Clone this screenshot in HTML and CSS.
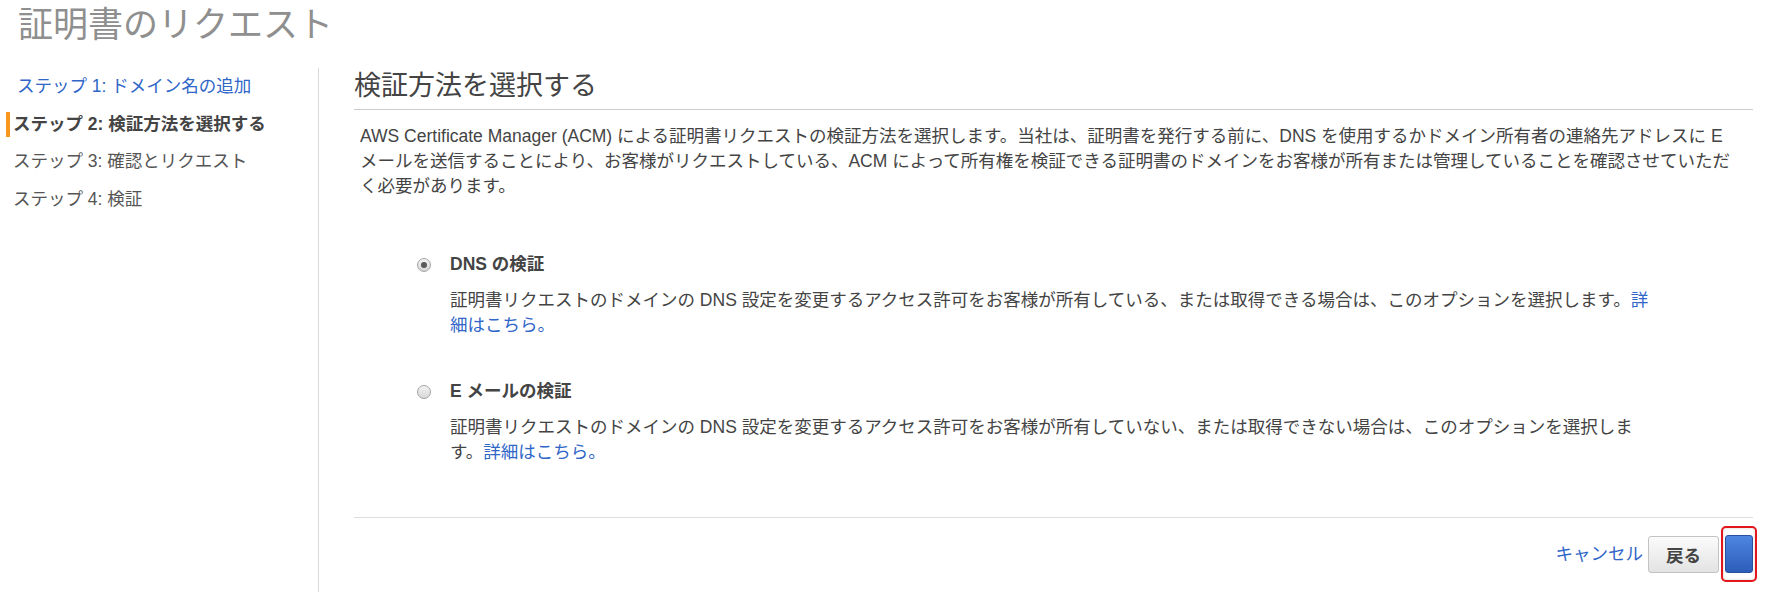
FILE: index.html
```html
<!DOCTYPE html>
<html lang="ja">
<head>
<meta charset="utf-8">
<title>証明書のリクエスト</title>
<link rel="stylesheet" href="styles.css">
</head>
<body>
<div class="page">
  <header class="page-head">
    <h1 class="page-title">証明書のリクエスト</h1>
  </header>
  <div class="wizard">
    <nav class="steps">
      <a class="step step-link" href="#">ステップ 1: ドメイン名の追加</a>
      <div class="step step-active">ステップ 2: 検証方法を選択する</div>
      <div class="step">ステップ 3: 確認とリクエスト</div>
      <div class="step">ステップ 4: 検証</div>
    </nav>
    <main class="content">
      <h2 class="section-title">検証方法を選択する</h2>
      <p class="intro">AWS Certificate Manager (ACM) による証明書リクエストの検証方法を選択します。当社は、証明書を発行する前に、DNS を使用するかドメイン所有者の連絡先アドレスに E メールを送信することにより、お客様がリクエストしている、ACM によって所有権を検証できる証明書のドメインをお客様が所有または管理していることを確認させていただく必要があります。</p>
      <div class="options">
        <div class="option">
          <span class="radio checked"></span>
          <div class="option-label">DNS の検証</div>
          <p class="option-desc">証明書リクエストのドメインの DNS 設定を変更するアクセス許可をお客様が所有している、または取得できる場合は、このオプションを選択します。<a class="link" href="#">詳細はこちら。</a></p>
        </div>
        <div class="option option-second">
          <span class="radio"></span>
          <div class="option-label">E メールの検証</div>
          <p class="option-desc">証明書リクエストのドメインの DNS 設定を変更するアクセス許可をお客様が所有していない、または取得できない場合は、このオプションを選択します。<a class="link" href="#">詳細はこちら。</a></p>
        </div>
      </div>
      <footer class="actions">
        <a class="cancel" href="#">キャンセル</a>
        <button class="btn btn-back" type="button">戻る</button>
        <button class="btn btn-primary" type="button" aria-label="次へ"></button>
      </footer>
    </main>
  </div>
</div>
</body>
</html>
```

FILE: styles.css
```css
html, body {
  margin: 0;
  padding: 0;
  background: #ffffff;
}

body {
  font-family: "Liberation Sans", "Noto Sans CJK JP", sans-serif;
  font-size: 17.5px;
  line-height: 25px;
  color: #444444;
}

.page {
  height: 592px;
  display: flex;
  flex-direction: column;
  overflow: hidden;
}

.page-head {
  height: 68px;
  flex-shrink: 0;
}

.page-title {
  margin: 0;
  padding: 5px 0 0 18px;
  font-size: 35px;
  line-height: 40px;
  font-weight: 400;
  color: #8f8f8f;
}

.wizard {
  flex: 1;
  display: flex;
}

.steps {
  width: 318px;
  flex-shrink: 0;
  border-right: 1px solid #d9d9d9;
  display: flex;
  flex-direction: column;
}

.step {
  height: 37.5px;
  display: flex;
  align-items: center;
  padding-left: 13px;
  color: #555555;
  text-decoration: none;
}

.step-link {
  padding-left: 17px;
  color: #2f66c8;
}

.step-active {
  padding-left: 6px;
  font-weight: 700;
  color: #444444;
}

.step-active::before {
  content: "";
  width: 4px;
  height: 25px;
  margin-right: 3px;
  background: #f7981d;
}

.content {
  flex: 1;
  padding: 0 15px 0 35px;
}

.section-title {
  margin: 0;
  padding-bottom: 5px;
  border-bottom: 1px solid #cccccc;
  font-size: 27px;
  line-height: 36px;
  font-weight: 400;
  color: #444444;
}

.intro {
  margin: 14px 16px 0 6px;
}

.options {
  margin-top: 53px;
  padding: 0 100px 0 63px;
}

.option {
  display: grid;
  grid-template-columns: 14px 1fr;
  column-gap: 19px;
}

.option-second {
  margin-top: 41px;
}

.radio {
  grid-column: 1;
  grid-row: 1;
  align-self: center;
  width: 14px;
  height: 14px;
  box-sizing: border-box;
  border-radius: 50%;
  border: 1px solid #a4a4a4;
  background: linear-gradient(#f3f3f3, #d6d6d6);
  display: flex;
  align-items: center;
  justify-content: center;
}

.radio.checked::after {
  content: "";
  width: 6px;
  height: 6px;
  border-radius: 50%;
  background: #5a5a5a;
}

.option-label {
  grid-column: 2;
  grid-row: 1;
  font-weight: 700;
  color: #444444;
}

.option-desc {
  grid-column: 2;
  grid-row: 2;
  margin: 11px 0 0 0;
}

.link {
  color: #2f66c8;
  text-decoration: none;
}

.actions {
  margin-top: 52px;
  border-top: 1px solid #dddddd;
  padding-top: 17px;
  display: flex;
  justify-content: flex-end;
  align-items: center;
}

.cancel {
  color: #2f66c8;
  text-decoration: none;
  margin-right: 5px;
}

.btn {
  font-family: inherit;
  font-size: 17.5px;
  box-sizing: border-box;
  border-radius: 3px;
  padding: 0;
  cursor: pointer;
}

.btn-back {
  width: 71px;
  height: 37px;
  margin-right: 6px;
  border: 1px solid #c3c3c3;
  background: linear-gradient(#fbfbfb, #e3e3e3);
  font-weight: 700;
  color: #444444;
}

.btn-primary {
  position: relative;
  width: 28px;
  height: 38px;
  border: 1px solid #2a4f9e;
  background: linear-gradient(#4d86e2, #2c5db9);
}

.btn-primary::after {
  content: "";
  position: absolute;
  top: -10px;
  bottom: -10px;
  left: -5px;
  right: -5px;
  border: 2px solid #e3161c;
  border-radius: 5px;
  box-shadow: inset 0 0 3px rgba(0, 0, 0, 0.18);
  pointer-events: none;
}
```
